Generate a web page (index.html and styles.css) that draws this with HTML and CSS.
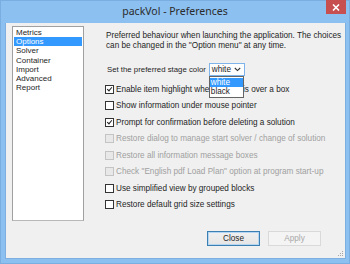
FILE: index.html
```html
<!DOCTYPE html>
<html lang="en">
<head>
  <meta charset="UTF-8" />
  <title>packVol - Preferences</title>
  <link rel="stylesheet" href="styles.css">
</head>
<body>

  <div class="window">
    <div class="titlebar">
      <span class="title">packVol - Preferences</span>
      <div class="close-btn">
        <svg width="8" height="7" viewBox="0 0 8 7"><path d="M1 0.5 L7 6.5 M7 0.5 L1 6.5" stroke="#fff" stroke-width="1.6"/></svg>
      </div>
    </div>

    <div class="content">
      <ul class="cat-list">
        <li>Metrics</li>
        <li class="selected">Options</li>
        <li>Solver</li>
        <li>Container</li>
        <li>Import</li>
        <li>Advanced</li>
        <li>Report</li>
      </ul>

      <div class="panel">
        <p class="intro">Preferred behaviour when launching the application. The choices can be changed in the "Option menu" at any time.</p>

        <div class="stage-row">
          <span class="stage-label">Set the preferred stage color</span>
          <div class="select">
            <span>white</span>
            <svg width="7" height="5" viewBox="0 0 7 5"><path d="M0.8 1 L3.5 3.6 L6.2 1" fill="none" stroke="#333" stroke-width="1.1"/></svg>
            <ul class="dropdown">
              <li class="hl">white</li>
              <li>black</li>
            </ul>
          </div>
        </div>

        <div class="options">
          <label class="opt"><span class="box checked"></span>Enable item highlight when mouse is over a box</label>
          <label class="opt"><span class="box"></span>Show information under mouse pointer</label>
          <label class="opt"><span class="box checked"></span>Prompt for confirmation before deleting a solution</label>
          <label class="opt disabled"><span class="box"></span>Restore dialog to manage start solver / change of solution</label>
          <label class="opt disabled"><span class="box"></span>Restore all information message boxes</label>
          <label class="opt disabled"><span class="box"></span>Check "English pdf Load Plan" option at program start-up</label>
          <label class="opt"><span class="box"></span>Use simplified view by grouped blocks</label>
          <label class="opt"><span class="box"></span>Restore default grid size settings</label>
        </div>

        <div class="buttons">
          <button class="btn default">Close</button>
          <button class="btn" disabled>Apply</button>
        </div>
      </div>

      <div class="grip">
        <svg width="5" height="5" viewBox="0 0 5 5" fill="#a8a8a8"><rect x="4" y="0" width="1" height="1"/><rect x="2" y="2" width="1" height="1"/><rect x="4" y="2" width="1" height="1"/><rect x="0" y="4" width="1" height="1"/><rect x="2" y="4" width="1" height="1"/><rect x="4" y="4" width="1" height="1"/></svg>
      </div>
    </div>
  </div>

</body>
</html>
```

FILE: styles.css
```css
body {
  margin: 0;
  font-family: "Liberation Sans", Arial, sans-serif;
  font-size: 8.2px;
  color: #1e1e1e;
  background: #fff;
}

.window {
  width: 350px;
  height: 264px;
  background: #8cc0f0;
  display: flex;
  flex-direction: column;
  box-sizing: border-box;
  border: 1px solid #7aaee0;
}

.titlebar {
  height: 22px;
  position: relative;
  display: flex;
  justify-content: center;
  align-items: center;
}

.title {
  font-family: "Noto Sans", sans-serif;
  font-size: 10.5px;
  color: #2b2b2b;
  margin-top: -3px;
}

.close-btn {
  position: absolute;
  top: -1px;
  right: 3px;
  width: 20px;
  height: 14px;
  background: #c74f4f;
  display: flex;
  align-items: center;
  justify-content: center;
}

.content {
  flex: 1;
  margin: 0 3px 4px 4px;
  background: #f0f0f0;
  display: flex;
  position: relative;
  border: 1px solid #7db0e0;
  border-top: none;
}

.cat-list {
  list-style: none;
  flex-shrink: 0;
  margin: 3px 0 0 6px;
  padding: 1px;
  width: 68px;
  height: 191px;
  background: #fff;
  border: 1px solid #a0a0a0;
  border-bottom-color: #b8b8b8;
  font-size: 8px;
}

.cat-list li {
  height: 9.2px;
  line-height: 9.2px;
  padding-left: 2px;
  white-space: nowrap;
}

.cat-list li.selected {
  background: #3399ff;
  color: #fff;
}

.panel {
  flex: 1;
  min-width: 0;
  display: flex;
  flex-direction: column;
  padding: 8px 0 0 21px;
}

.intro {
  margin: 0 0 0 1px;
  line-height: 10px;
  width: 240px;
}

.stage-row {
  display: flex;
  align-items: center;
  margin-top: 12px;
  margin-left: 2px;
  gap: 3px;
}

.stage-label {
  font-size: 7.8px;
}

.select {
  position: relative;
  width: 29px;
  height: 11px;
  border: 1px solid #7eb4ea;
  background: #fdfdfd;
  display: flex;
  align-items: center;
  justify-content: space-between;
  padding: 0 3px 0 2px;
}

.dropdown {
  position: absolute;
  top: 12px;
  left: -1px;
  width: 33px;
  list-style: none;
  margin: 0;
  padding: 1px 0;
  background: #fff;
  border: 1px solid #646464;
  z-index: 2;
}

.dropdown li {
  height: 9px;
  line-height: 9px;
  padding-left: 1px;
}

.dropdown li.hl {
  background: #3399ff;
  color: #fff;
}

.options {
  margin-top: 5px;
  display: flex;
  flex-direction: column;
}

.opt {
  height: 16.5px;
  display: flex;
  align-items: center;
  white-space: nowrap;
}

.opt.disabled {
  color: #a0a0a0;
}

.box {
  width: 7px;
  height: 7px;
  border: 1px solid #333;
  background: #fff;
  margin-right: 2px;
  flex-shrink: 0;
  position: relative;
}

.box.checked::after {
  content: "";
  position: absolute;
  left: 2px;
  top: 0px;
  width: 2px;
  height: 4px;
  border: solid #222;
  border-width: 0 1.5px 1.5px 0;
  transform: rotate(40deg);
}

.opt.disabled .box {
  border-color: #c4c4c4;
  background: #e8e8e8;
}

.buttons {
  display: flex;
  gap: 8px;
  margin-top: 18px;
  margin-left: 102px;
}

.btn {
  width: 53px;
  height: 15px;
  padding: 0;
  font-family: inherit;
  font-size: 8.2px;
  color: #1e1e1e;
  border: 1px solid #acacac;
  background: linear-gradient(#f0f0f0, #e5e5e5);
}

.btn.default {
  border-color: #3c7fb1;
  box-shadow: inset 0 0 0 1px #b4d6f2;
}

.btn:disabled {
  color: #a8a8a8;
  border-color: #d9d9d9;
  background: #f4f4f4;
}

.grip {
  position: absolute;
  right: 2px;
  bottom: 2px;
  line-height: 0;
}
```
